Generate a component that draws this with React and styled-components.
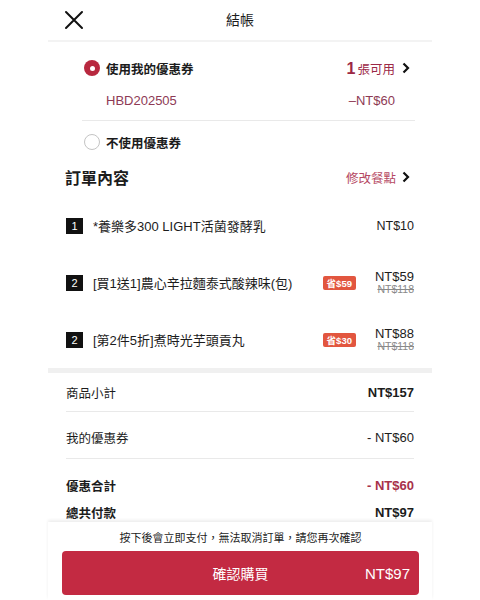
import React from 'react';
import styled, { createGlobalStyle } from 'styled-components';

const GlobalStyle = createGlobalStyle`
  html, body { margin: 0; padding: 0; background: #fff; }
  body {
    font-family: "Liberation Sans", "Noto Sans CJK TC", sans-serif;
    color: #1c1c1c;
  }
  * { box-sizing: border-box; }
`;

const RED = '#b8283f';
const MAROON = '#9c2846';

const Page = styled.div`
  width: 384px;
  height: 100vh;
  margin: 0 auto;
  display: flex;
  flex-direction: column;
  background: #fff;
`;

const Scroll = styled.div`
  flex: 1;
  overflow: hidden;
`;

const Header = styled.header`
  height: 42px;
  display: grid;
  grid-template-columns: 1fr auto 1fr;
  align-items: center;
  padding: 0 16px;
  border-bottom: 2px solid #f3f3f3;
`;

const Title = styled.h1`
  margin: 0;
  font-size: 14px;
  font-weight: 400;
  line-height: 40px;
`;

const CloseButton = styled.button`
  border: 0;
  background: none;
  padding: 0;
  width: 20px;
  height: 20px;
  display: flex;
  justify-self: start;
  cursor: pointer;
`;

const CouponBlock = styled.section`
  padding: 8px 17px 0 36px;
`;

const CouponRow = styled.div`
  height: ${p => p.h}px;
  padding-left: ${p => p.indent || 0}px;
  display: flex;
  align-items: center;
`;

const Radio = styled.span`
  width: 16px;
  height: 16px;
  border-radius: 50%;
  flex: none;
  display: flex;
  align-items: center;
  justify-content: center;
  margin-right: 6px;
  background: ${p => (p.checked ? RED : '#fff')};
  border: ${p => (p.checked ? 'none' : '1.5px solid #c4c4c4')};
  &::after {
    content: '';
    display: ${p => (p.checked ? 'block' : 'none')};
    width: 5px;
    height: 5px;
    border-radius: 50%;
    background: #fff;
  }
`;

const OptionLabel = styled.span`
  flex: 1;
  font-size: 12.5px;
  font-weight: 700;
`;

const Available = styled.span`
  color: ${MAROON};
  font-size: 12.5px;
  display: flex;
  align-items: baseline;
  b {
    font-size: 16px;
    margin-right: 2px;
  }
`;

const CouponCode = styled.span`
  flex: 1;
  color: #8e3a55;
  font-size: 13px;
`;

const CouponAmount = styled.span`
  color: #8e3a55;
  font-size: 13px;
  padding-right: 20px;
`;

const Divider = styled.hr`
  margin: ${p => p.m || '0'};
  border: 0;
  border-top: 1px solid #e9e9e9;
`;

const Chevron = styled.svg`
  width: 8px;
  height: 12px;
  flex: none;
  margin: 0 ${p => p.mr || 0}px 0 ${p => p.ml || 8}px;
`;

const SectionHead = styled.div`
  height: 28px;
  padding: 0 18px 0 17px;
  display: flex;
  align-items: center;
`;

const SectionTitle = styled.h2`
  flex: 1;
  margin: 0;
  font-size: 16px;
  font-weight: 700;
`;

const EditLink = styled.a`
  color: #b54862;
  font-size: 12.5px;
  text-decoration: none;
  display: flex;
  align-items: center;
`;

const ItemList = styled.ul`
  list-style: none;
  margin: 0;
  padding: 6px 18px 0 18px;
`;

const ItemRow = styled.li`
  height: 57px;
  display: flex;
  align-items: center;
`;

const Qty = styled.span`
  width: 17px;
  height: 16px;
  flex: none;
  background: #111;
  color: #fff;
  font-size: 11px;
  display: flex;
  align-items: center;
  justify-content: center;
  margin-right: 10px;
`;

const ItemName = styled.span`
  flex: 1;
  font-size: 13px;
  white-space: nowrap;
`;

const SaveTag = styled.span`
  height: 14px;
  padding: 0 4px;
  border-radius: 2px;
  background: #e2563f;
  color: #fff;
  font-size: 9.5px;
  font-weight: 700;
  display: flex;
  align-items: center;
  margin-right: 19px;
`;

const PriceBox = styled.div`
  min-width: 38px;
  display: flex;
  flex-direction: column;
  align-items: flex-end;
`;

const Price = styled.span`
  font-size: ${p => (p.stack ? 13 : 12.5)}px;
  line-height: 14px;
`;

const OldPrice = styled.span`
  font-size: 10.5px;
  line-height: 11px;
  color: #8a8a8a;
  text-decoration: line-through;
`;

const GrayBar = styled.div`
  height: 5px;
  background: #f0f0f0;
`;

const Summary = styled.div`
  padding: 0 18px;
`;

const SumRow = styled.div`
  height: ${p => p.h}px;
  padding-top: ${p => p.pt || 0}px;
  display: flex;
  align-items: center;
  justify-content: space-between;
  font-size: 12.5px;
  font-weight: ${p => (p.bold ? 700 : 400)};
`;

const SumValue = styled.span`
  font-size: 13px;
  font-weight: ${p => (p.bold ? 700 : 400)};
  color: ${p => (p.red ? '#a8324a' : 'inherit')};
`;

const Footer = styled.footer`
  flex: none;
  position: relative;
  z-index: 1;
  background: #fff;
  padding: 8px 13px 5px 14px;
  box-shadow: 0 -2px 3px rgba(0, 0, 0, 0.07);
`;

const Note = styled.p`
  margin: 0;
  font-size: 11px;
  line-height: 16px;
  text-align: center;
`;

const BuyButton = styled.button`
  width: 100%;
  height: 44px;
  margin-top: 5px;
  border: 0;
  border-radius: 4px;
  background: #c32a42;
  color: #fff;
  font-family: inherit;
  display: grid;
  grid-template-columns: 1fr auto 1fr;
  align-items: center;
  padding: 0 9px 0 0;
  cursor: pointer;
`;

const BuyLabel = styled.span`
  font-size: 14px;
  padding-left: 9px;
`;

const BuyTotal = styled.span`
  font-size: 15px;
  justify-self: end;
`;

const ChevronIcon = props => (
  <Chevron viewBox="0 0 8 12" {...props}>
    <polyline points="1.5,1.5 6,6 1.5,10.5" fill="none" stroke="#111" strokeWidth="2.2" strokeLinejoin="miter" />
  </Chevron>
);

const items = [
  { qty: 1, name: '*養樂多300 LIGHT活菌發酵乳', price: 'NT$10' },
  { qty: 2, name: '[買1送1]農心辛拉麵泰式酸辣味(包)', price: 'NT$59', old: 'NT$118', save: '省$59' },
  { qty: 2, name: '[第2件5折]煮時光芋頭貢丸', price: 'NT$88', old: 'NT$118', save: '省$30' },
];

export default function App() {
  return (
    <>
      <GlobalStyle />
      <Page>
        <Scroll>
          <Header>
            <CloseButton aria-label="close">
              <svg width="20" height="20" viewBox="0 0 20 20">
                <path d="M2 2 L18 18 M18 2 L2 18" stroke="#111" strokeWidth="2" strokeLinecap="round" />
              </svg>
            </CloseButton>
            <Title>結帳</Title>
            <span />
          </Header>

          <CouponBlock>
            <CouponRow h={36}>
              <Radio checked />
              <OptionLabel>使用我的優惠券</OptionLabel>
              <Available><b>1</b>張可用</Available>
              <ChevronIcon ml={7} mr={5} />
            </CouponRow>
            <CouponRow h={28} indent={22}>
              <CouponCode>HBD202505</CouponCode>
              <CouponAmount>–NT$60</CouponAmount>
            </CouponRow>
            <Divider m="6px 0 0 -2px" />
            <CouponRow h={42}>
              <Radio />
              <OptionLabel>不使用優惠券</OptionLabel>
            </CouponRow>
          </CouponBlock>

          <SectionHead>
            <SectionTitle>訂單內容</SectionTitle>
            <EditLink>修改餐點<ChevronIcon ml={6} mr={4} /></EditLink>
          </SectionHead>

          <ItemList>
            {items.map((it, i) => (
              <ItemRow key={i}>
                <Qty>{it.qty}</Qty>
                <ItemName>{it.name}</ItemName>
                {it.save && <SaveTag>{it.save}</SaveTag>}
                <PriceBox>
                  <Price stack={!!it.old}>{it.price}</Price>
                  {it.old && <OldPrice>{it.old}</OldPrice>}
                </PriceBox>
              </ItemRow>
            ))}
          </ItemList>

          <GrayBar />

          <Summary>
            <SumRow h={38}>
              <span>商品小計</span>
              <SumValue bold>NT$157</SumValue>
            </SumRow>
            <Divider />
            <SumRow h={46} pt={4}>
              <span>我的優惠券</span>
              <SumValue>- NT$60</SumValue>
            </SumRow>
            <Divider />
            <SumRow h={40} pt={12} bold>
              <span>優惠合計</span>
              <SumValue bold red>- NT$60</SumValue>
            </SumRow>
            <SumRow h={27} bold>
              <span>總共付款</span>
              <SumValue bold>NT$97</SumValue>
            </SumRow>
          </Summary>
        </Scroll>

        <Footer>
          <Note>按下後會立即支付，無法取消訂單，請您再次確認</Note>
          <BuyButton>
            <span />
            <BuyLabel>確認購買</BuyLabel>
            <BuyTotal>NT$97</BuyTotal>
          </BuyButton>
        </Footer>
      </Page>
    </>
  );
}
